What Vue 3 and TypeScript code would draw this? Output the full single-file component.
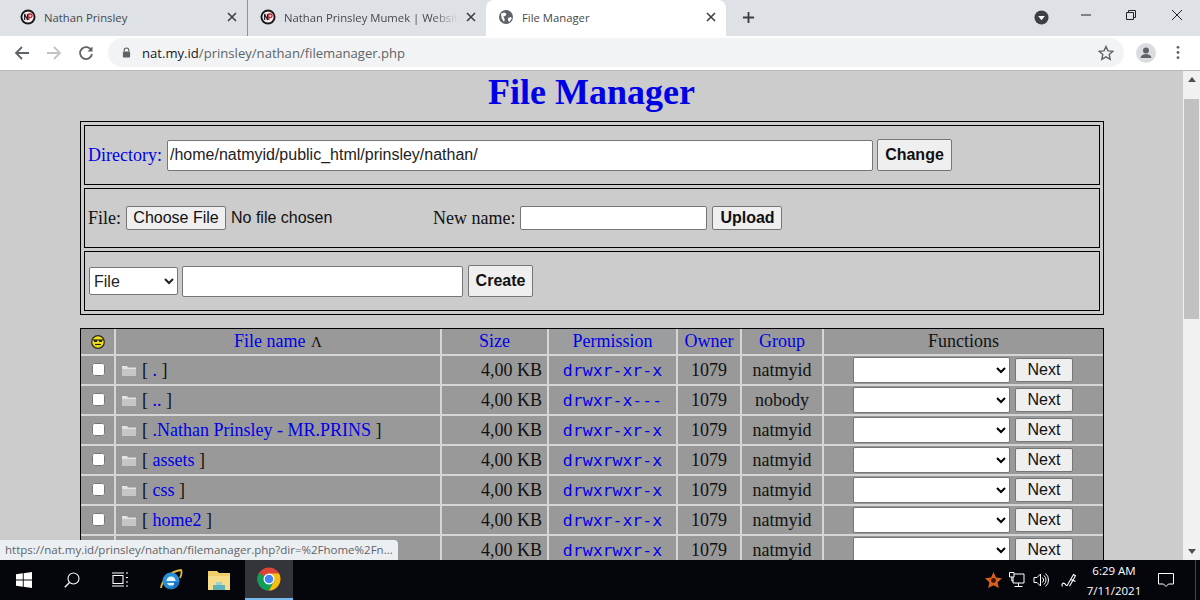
<script setup lang="ts">
// File Manager page inside a Chrome window on the Windows taskbar
interface FileRow {
  id: number;
  name: string;
  perm: string;
  group: string;
}

// the last row's name sits behind the status bubble
const files: FileRow[] = [
  { id: 1, name: ".", perm: "drwxr-xr-x", group: "natmyid" },
  { id: 2, name: "..", perm: "drwxr-x---", group: "nobody" },
  { id: 3, name: ".Nathan Prinsley - MR.PRINS", perm: "drwxr-xr-x", group: "natmyid" },
  { id: 4, name: "assets", perm: "drwxrwxr-x", group: "natmyid" },
  { id: 5, name: "css", perm: "drwxrwxr-x", group: "natmyid" },
  { id: 6, name: "home2", perm: "drwxr-xr-x", group: "natmyid" },
  { id: 7, name: "", perm: "drwxrwxr-x", group: "natmyid" },
];
</script>

<template>
  <div class="screen">
    <!-- tab strip -->
    <div class="tabstrip">
      <div class="tab">
        <svg class="favicon" viewBox="0 0 16 16"><circle cx="8" cy="8" r="7.5" fill="#1c1518" /><circle cx="8" cy="8" r="5.6" fill="#f3eeee" /><path d="M4.6 11V5l3 6V5" fill="none" stroke="#26262c" stroke-width="1.3" /><path d="M8.8 11V5h1.5a1.7 1.7 0 0 1 0 3.6H8.8" fill="none" stroke="#c0202a" stroke-width="1.3" /></svg>
        <span class="tab-title">Nathan Prinsley</span>
        <svg class="tab-close" viewBox="0 0 10 10"><path d="M1 1l8 8M9 1l-8 8" stroke="#3c4043" stroke-width="1.6" /></svg>
      </div>
      <div class="tab tab--second">
        <svg class="favicon" viewBox="0 0 16 16"><circle cx="8" cy="8" r="7.5" fill="#1c1518" /><circle cx="8" cy="8" r="5.6" fill="#f3eeee" /><path d="M4.6 11V5l3 6V5" fill="none" stroke="#26262c" stroke-width="1.3" /><path d="M8.8 11V5h1.5a1.7 1.7 0 0 1 0 3.6H8.8" fill="none" stroke="#c0202a" stroke-width="1.3" /></svg>
        <span class="tab-title tab-title--fade">Nathan Prinsley Mumek | Website</span>
        <svg class="tab-close" viewBox="0 0 10 10"><path d="M1 1l8 8M9 1l-8 8" stroke="#3c4043" stroke-width="1.6" /></svg>
      </div>
      <div class="tab tab--active">
        <svg class="favicon favicon--globe" viewBox="0 0 16 16"><circle cx="8" cy="8" r="7" fill="#5f6368" /><path d="M3 4.5l3.5-1 2 1.5-1.2 2 -2 .5 1.5 3-.8 2.5L3.5 9zM10 9l3-1 .8 1.5-2.5 3.5-1.3-1.5z" fill="#fff" /></svg>
        <span class="tab-title">File Manager</span>
        <svg class="tab-close" viewBox="0 0 10 10"><path d="M1 1l8 8M9 1l-8 8" stroke="#3c4043" stroke-width="1.6" /></svg>
      </div>
      <svg class="new-tab" viewBox="0 0 14 14"><path d="M7 1v12M1 7h12" stroke="#3c4043" stroke-width="2" /></svg>
      <div class="window-controls">
        <svg class="tab-search" viewBox="0 0 16 16"><circle cx="8" cy="8" r="7.5" fill="#3c4043" /><path d="M4.5 6.5h7L8 11z" fill="#fff" /></svg>
        <svg class="win-btn win-btn--min" viewBox="0 0 12 12"><path d="M1 6h10" stroke="#222" /></svg>
        <svg class="win-btn win-btn--max" viewBox="0 0 12 12"><path d="M1.5 3.5h7v7h-7zM3.5 3.500v-2h7v7h-2" fill="none" stroke="#222" /></svg>
        <svg class="win-btn win-btn--close" viewBox="0 0 12 12"><path d="M1 1l10 10M11 1L1 11" stroke="#222" /></svg>
      </div>
    </div>

    <!-- address bar -->
    <div class="toolbar">
      <svg class="nav-icon" viewBox="0 0 16 16"><path d="M15 8H2M8 2L2 8l6 6" fill="none" stroke="#5f6368" stroke-width="1.8" /></svg>
      <svg class="nav-icon" viewBox="0 0 16 16"><path d="M1 8h13M8 2l6 6-6 6" fill="none" stroke="#c2c4c7" stroke-width="1.8" /></svg>
      <svg class="nav-icon" viewBox="0 0 16 16"><path d="M13.500 5.500A6 6 0 1 0 14 9" fill="none" stroke="#5f6368" stroke-width="1.8" /><path d="M14.500 1.500v5h-5z" fill="#5f6368" /></svg>
      <div class="omnibox">
        <svg class="lock" viewBox="0 0 10 12"><path d="M2.500 5V3.500a2.500 2.500 0 0 1 5 0V5" fill="none" stroke="#5f6368" stroke-width="1.300" /><rect x="1" y="5" width="8" height="6.500" rx="1" fill="#5f6368" /></svg>
        <span class="url"><span class="url-host">nat.my.id</span>/prinsley/nathan/filemanager.php</span>
        <svg class="star" viewBox="0 0 16 16"><path d="M8 1.500l2 4.400 4.700.5-3.500 3.200 1 4.700L8 11.900l-4.200 2.400 1-4.700-3.500-3.200 4.700-.5z" fill="none" stroke="#5f6368" stroke-width="1.400" /></svg>
      </div>
      <div class="profile">
        <svg viewBox="0 0 20 20"><circle cx="10" cy="10" r="10" fill="#dadce0" /><circle cx="10" cy="7.500" r="3" fill="#5f6368" /><path d="M4.500 15c.5-3 3-4 5.500-4s5 1 5.500 4z" fill="#5f6368" /></svg>
      </div>
      <svg class="menu-dots" viewBox="0 0 4 16"><circle cx="2" cy="2.500" r="1.500" fill="#5f6368" /><circle cx="2" cy="8" r="1.500" fill="#5f6368" /><circle cx="2" cy="13.500" r="1.500" fill="#5f6368" /></svg>
    </div>

    <!-- page -->
    <div class="viewport">
      <div class="page">
        <h1 class="title">File Manager</h1>

        <div class="forms">
          <div class="form-row">
            <span class="label label--link">Directory:</span>
            <input class="field field--dir" type="text" value="/home/natmyid/public_html/prinsley/nathan/" />
            <button class="btn btn--bold btn--change" type="button">Change</button>
          </div>
          <div class="form-row">
            <span class="label">File:</span>
            <button class="btn btn--choose" type="button">Choose File</button>
            <span class="no-file">No file chosen</span>
            <span class="label label--newname">New name:</span>
            <input class="field field--newname" type="text" />
            <button class="btn btn--bold btn--upload" type="button">Upload</button>
          </div>
          <div class="form-row">
            <select class="type-select">
              <option>File</option>
            </select>
            <input class="field field--create" type="text" />
            <button class="btn btn--bold btn--create" type="button">Create</button>
          </div>
        </div>

        <table class="files">
          <colgroup>
            <col style="width: 35px" />
            <col style="width: 326px" />
            <col style="width: 107px" />
            <col style="width: 129px" />
            <col style="width: 64px" />
            <col style="width: 82px" />
            <col style="width: 279px" />
          </colgroup>
          <thead>
            <tr>
              <th>
                <svg class="smiley" viewBox="0 0 14 14"><circle cx="7" cy="7" r="6.300" fill="#efe021" stroke="#2a2a10" stroke-width="1.200" /><path d="M1.500 5h11" stroke="#2a2a10" stroke-width="1.200" /><rect x="3" y="5" width="3" height="2" fill="#2a2a10" /><rect x="8" y="5" width="3" height="2" fill="#2a2a10" /><path d="M4 9.500h6" stroke="#2a2a10" stroke-width="1.200" /></svg>
              </th>
              <th><a class="link">File name</a> <span class="sort">Λ</span></th>
              <th><a class="link">Size</a></th>
              <th class="th--perm"><a class="link">Permission</a></th>
              <th><a class="link">Owner</a></th>
              <th><a class="link">Group</a></th>
              <th>Functions</th>
            </tr>
          </thead>
          <tbody>
            <tr v-for="file in files" :key="file.id">
              <td class="cell-check"><input class="check" type="checkbox" /></td>
              <td class="cell-name">
                <svg class="folder" viewBox="0 0 14 11"><path d="M0 1h5l1 1.500h8V11H0z" fill="#e2e2e2" /><path d="M0 4h14v7H0z" fill="#c6c6c6" /></svg>
                <span v-if="file.name">[ <a class="link">{{ file.name }}</a> ]</span>
              </td>
              <td class="cell-size">4,00 KB</td>
              <td class="cell-center"><a class="perm">{{ file.perm }}</a></td>
              <td class="cell-center">1079</td>
              <td class="cell-center">{{ file.group }}</td>
              <td class="cell-actions">
                <select class="action-select"><option></option></select>
                <button class="btn btn--next" type="button">Next</button>
              </td>
            </tr>
          </tbody>
        </table>
      </div>

      <div class="scrollbar">
        <svg class="sb-arrow" viewBox="0 0 8 5"><path d="M0 5l4-5 4 5z" fill="#505050" /></svg>
        <div class="sb-track"><div class="sb-thumb"></div></div>
        <svg class="sb-arrow" viewBox="0 0 8 5"><path d="M0 0l4 5 4-5z" fill="#505050" /></svg>
      </div>

      <div class="status">https://nat.my.id/prinsley/nathan/filemanager.php?dir=%2Fhome%2Fn...</div>
    </div>

    <!-- windows taskbar -->
    <div class="taskbar">
      <div class="task-item">
        <svg class="task-win" viewBox="0 0 16 16"><path d="M0 2.300l6.800-1v6.300H0zM7.700 1.200L16 0v7.600H7.700zM0 8.400h6.800v6.300l-6.800-1zM7.700 8.400H16V16l-8.300-1.200z" fill="#fff" /></svg>
      </div>
      <div class="task-item">
        <svg class="task-icon" viewBox="0 0 16 16"><circle cx="9.500" cy="6.500" r="5.500" fill="none" stroke="#fff" stroke-width="1.100" /><path d="M5.500 10.500L.8 15.200" stroke="#fff" stroke-width="1.300" /></svg>
      </div>
      <div class="task-item">
        <svg class="task-icon" viewBox="0 0 16 16"><path d="M1 3.500h10v8H1zM0 1h12M0 14h12M14 1h2M14 5.500h2M14 10h2M14 14h2" fill="none" stroke="#fff" stroke-width="1.100" /></svg>
      </div>
      <div class="task-item task-item--ie">
        <svg class="task-app" viewBox="0 0 24 24"><path d="M2 20C3 12 12 3 22 2c1.500 3 0 6-1 8" fill="none" stroke="#e3b93a" stroke-width="1.800" /><circle cx="12" cy="13" r="8.500" fill="#2a8fd8" /><circle cx="12" cy="13" r="4.500" fill="#e8f5fc" /><path d="M4 13h16v2H4z" fill="#2a8fd8" /><path d="M15 14h5c-.5 4-4 7-8 7-2 0-3-.5-4-1.500h5c1 0 1.500-.5 2-1.500z" fill="#1c6fb8" /></svg>
      </div>
      <div class="task-item">
        <svg class="task-app" viewBox="0 0 24 24"><path d="M1 3h9l2 2h11v17H1z" fill="#f0cf6b" /><path d="M1 8h22v14H1z" fill="#f7dd8a" /><path d="M6 17h12v5H6z" fill="#5fb2b8" /><path d="M9 14h6v3H9z" fill="#9ed3d6" /></svg>
      </div>
      <div class="task-item task-item--active">
        <svg class="task-app" viewBox="0 0 48 48"><circle cx="24" cy="24" r="23" fill="#db4437" /><path d="M24 24L4 12A23 23 0 0 0 24 47l10-18z" fill="#0f9d58" /><path d="M24 13h20a23 23 0 0 1-20 34l11-20z" fill="#f4c20d" /><circle cx="24" cy="24" r="11" fill="#fff" /><circle cx="24" cy="24" r="8.500" fill="#4285f4" /></svg>
      </div>

      <div class="tray">
        <svg class="tray-star" viewBox="0 0 18 18"><path d="M9 0l2.600 5.700L18 6.500l-4.600 4.300 1.200 6.200L9 14l-5.600 3 1.200-6.200L0 6.500l6.400-.8z" fill="#d9601c" /><circle cx="9" cy="9" r="2.600" fill="#3a1510" /></svg>
        <svg class="tray-net" viewBox="0 0 16 16"><path d="M4 2h11v9H4zM9.500 11v3M5.500 14.500h8" fill="none" stroke="#fff" /><path d="M.5.500h4.500v4.500H.5z" fill="#0a0a10" stroke="#fff" /><path d="M2.800 5v4h1.500" fill="none" stroke="#fff" /></svg>
        <svg class="tray-vol" viewBox="0 0 16 16"><path d="M1 5.500h3L7.500 2v12L4 10.500H1z" fill="none" stroke="#fff" /><path d="M9.500 5.500a3.500 3.500 0 0 1 0 5M11 3.500a6 6 0 0 1 0 9M12.500 1.500a8.500 8.500 0 0 1 0 13" fill="none" stroke="#fff" /></svg>
        <svg class="tray-pen" viewBox="0 0 16 16"><path d="M1.500 14.500c-1.500-2 .5-4 2-3s1.500 3 3 1.500l6-10.500 2 1.200-6 10.500" fill="none" stroke="#fff" stroke-width="1.100" /><path d="M10 8c1.500-.5 3 .5 4.500 1.500" fill="none" stroke="#fff" stroke-width="1.100" /></svg>
        <div class="clock">
          <div>6:29 AM</div>
          <div>7/11/2021</div>
        </div>
        <svg class="tray-note" viewBox="0 0 16 16"><path d="M.5 1.500h15v10.500h-5L8 14.500 5.500 12h-5z" fill="none" stroke="#fff" /></svg>
        <div class="show-desktop"></div>
      </div>
    </div>
  </div>
</template>

<style>
html,
body {
  margin: 0;
  overflow: hidden;
}
</style>

<style scoped>
.screen {
  width: 1200px;
  height: 600px;
  display: flex;
  flex-direction: column;
  overflow: hidden;
  font-family: "Liberation Serif", serif;
}

/* Tab strip */
.tabstrip {
  height: 36px;
  flex: none;
  display: flex;
  align-items: stretch;
  padding-left: 8px;
  background: #dee1e6;
  font-family: "Open Sans", "Liberation Sans", sans-serif;
  font-size: 11.3px;
  color: #45484c;
}

.tab {
  width: 239px;
  box-sizing: border-box;
  display: flex;
  align-items: center;
  padding: 0 8px 2px 12px;
  position: relative;
}

.tab--second {
  width: 239px;
  border-left: 1px solid #8f9296;
  margin: 0;
  padding-left: 12px;
}

.tab--active {
  width: 240px;
  background: #fff;
  border-radius: 8px 8px 0 0;
}

.favicon {
  width: 16px;
  height: 16px;
  flex: none;
  margin-right: 8px;
}

.tab-title {
  flex: 1;
  white-space: nowrap;
  overflow: hidden;
}

.tab-title--fade {
  -webkit-mask-image: linear-gradient(to right, #000 85%, transparent 100%);
  mask-image: linear-gradient(to right, #000 85%, transparent 100%);
}

.tab-close {
  width: 10px;
  height: 10px;
  flex: none;
  margin: 0 2px 0 8px;
}

.new-tab {
  width: 13px;
  height: 13px;
  align-self: center;
  margin: -2px 0 0 16px;
}

.window-controls {
  margin-left: auto;
  display: flex;
  align-items: center;
  padding: 0 17px 2px 0;
}

.tab-search {
  width: 15px;
  height: 15px;
  margin: 1px 31px 0 0;
}

.win-btn {
  width: 12px;
  height: 12px;
  margin-top: -4px;
}

.win-btn--min {
  margin-right: 33px;
}

.win-btn--max {
  margin-right: 34px;
}

/* Toolbar */
.toolbar {
  height: 35px;
  flex: none;
  display: flex;
  align-items: center;
  box-sizing: border-box;
  padding: 0 0 1px 14px;
  background: #fff;
  border-bottom: 1px solid #b9b9b9;
}

.nav-icon {
  width: 16px;
  height: 16px;
  margin-right: 16px;
}

.omnibox {
  width: 1016px;
  height: 29px;
  margin-left: -2px;
  display: flex;
  align-items: center;
  padding: 0 10px 0 14px;
  box-sizing: border-box;
  border-radius: 15px;
  background: #f1f3f4;
  font-family: "Open Sans", "Liberation Sans", sans-serif;
  font-size: 13.1px;
  color: #5f6368;
}

.lock {
  width: 9px;
  height: 11px;
  margin-right: 11px;
}

.url {
  flex: 1;
}

.url-host {
  color: #202124;
}

.star {
  width: 16px;
  height: 16px;
}

.profile {
  width: 20px;
  height: 20px;
  margin-left: 12px;
}

.menu-dots {
  width: 4px;
  height: 15px;
  margin-left: 20px;
}

/* Page */
.viewport {
  flex: 1;
  min-height: 0;
  display: flex;
  position: relative;
  background: #ccc;
  overflow: hidden;
}

.page {
  flex: 1;
  min-width: 0;
  color: #111;
  font-size: 18px;
}

.title {
  margin: 0;
  height: 50px;
  line-height: 43px;
  text-align: center;
  font-size: 36px;
  font-weight: bold;
  color: #0000e6;
  padding-right: 0;
}

.forms {
  margin-left: 80px;
  width: 1024px;
  box-sizing: border-box;
  border: 1px solid #000;
  padding: 3px;
  display: flex;
  flex-direction: column;
  gap: 2px;
}

.form-row {
  height: 60px;
  box-sizing: border-box;
  border: 1px solid #000;
  display: flex;
  align-items: center;
  padding: 0 0 0 3px;
}

.form-row + .form-row {
  margin-top: 1px;
}

.form-row:nth-child(3) {
  padding-left: 4px;
}

.label {
  white-space: nowrap;
}

.label--link {
  color: #0000e6;
  margin-right: 5px;
}

.label--newname {
  margin-left: 99px;
  margin-right: 5px;
}

.field {
  box-sizing: border-box;
  border: 1px solid #767676;
  border-radius: 2px;
  background: #fff;
  font-family: "Liberation Sans", sans-serif;
  font-size: 16px;
  color: #222;
  padding: 1px 2px;
  margin: 0;
}

.field--dir {
  width: 706px;
  height: 31px;
}

.field--newname {
  width: 187px;
  height: 24px;
}

.field--create {
  width: 281px;
  height: 31px;
  margin-left: 4px;
}

.btn {
  box-sizing: border-box;
  border: 1px solid #767676;
  border-radius: 2px;
  background: #efefef;
  font-family: "Liberation Sans", sans-serif;
  font-size: 16px;
  color: #111;
  padding: 0;
  margin: 0;
}

.btn--bold {
  font-weight: bold;
}

.btn--change {
  width: 75px;
  height: 32px;
  margin-left: 4px;
}

.btn--choose {
  width: 100px;
  height: 24px;
  margin-left: 5px;
}

.no-file {
  width: 103px;
  margin-left: 5px;
  font-family: "Liberation Sans", sans-serif;
  font-size: 16px;
  white-space: nowrap;
}

.btn--upload {
  width: 70px;
  height: 24px;
  margin-left: 5px;
}

.btn--create {
  width: 65px;
  height: 32px;
  margin-left: 5px;
}

.type-select {
  width: 89px;
  height: 28px;
  box-sizing: border-box;
  background: #fff;
  border: 1px solid #767676;
  border-radius: 2px;
  font-family: "Liberation Sans", sans-serif;
  font-size: 16px;
  color: #222;
  margin: 0;
}

/* File table */
.files {
  margin: 13px 0 0 80px;
  width: 1024px;
  table-layout: fixed;
  border-collapse: separate;
  border-spacing: 0;
  border: 1px solid #000;
  border-bottom: none;
  background: #999;
  font-size: 18px;
  color: #111;
}

.files th,
.files td {
  padding: 0;
  border-right: 2px solid #d6d6d6;
  border-bottom: 2px solid #d6d6d6;
  box-sizing: border-box;
  height: 30px;
  font-weight: normal;
  overflow: hidden;
  white-space: nowrap;
}

.files th {
  height: 27px;
  text-align: center;
}

.files th:last-child,
.files td:last-child {
  border-right: none;
}

.th--perm {
  background: #9b9d9f;
}

.link {
  color: #0000e6;
}

.sort {
  margin-left: 1px;
  font-size: 15px;
}

.smiley {
  width: 14px;
  height: 14px;
  display: block;
  margin: 0 auto;
}

.cell-check {
  text-align: center;
}

.check {
  display: block;
  width: 13px;
  height: 13px;
  margin: -2px 0 0 11px;
}

.cell-name {
  padding-left: 6px !important;
}

.cell-name span {
  vertical-align: middle;
}

.folder {
  width: 14px;
  height: 11px;
  margin-right: 6px;
  vertical-align: middle;
}

.cell-size {
  text-align: right;
  padding-right: 5px !important;
}

.cell-center {
  text-align: center;
}

.perm {
  font-family: "DejaVu Sans Mono", monospace;
  font-size: 16.500px;
  color: #0000e6;
}

.cell-actions {
  padding-left: 29px !important;
}

.cell-actions > * {
  vertical-align: middle;
}

.action-select {
  width: 157px;
  height: 26px;
  box-sizing: border-box;
  background: #fff;
  border: 1px solid #767676;
  border-radius: 2px;
  margin: 0;
}

.btn--next {
  width: 58px;
  height: 24px;
  margin-left: 5px;
  font-weight: normal;
}

/* Scrollbar */
.scrollbar {
  width: 17px;
  flex: none;
  display: flex;
  flex-direction: column;
  align-items: center;
  background: #f1f1f1;
}

.sb-arrow {
  width: 8px;
  height: 5px;
  margin: 6px 0;
  flex: none;
}

.sb-track {
  flex: 1;
  width: 100%;
}

.sb-thumb {
  width: 15px;
  height: 220px;
  margin: 11px auto 0;
  background: #c1c1c1;
}

.status {
  position: absolute;
  left: 0;
  bottom: 0;
  width: 398px;
  height: 20px;
  box-sizing: border-box;
  padding: 2px 0 0 5px;
  background: #eceff1;
  border-top-right-radius: 4px;
  font-family: "Open Sans", "Liberation Sans", sans-serif;
  font-size: 11.500px;
  color: #5f6368;
  white-space: nowrap;
  overflow: hidden;
}

/* Taskbar */
.taskbar {
  height: 40px;
  flex: none;
  display: flex;
  background: #05060c;
  font-family: "Open Sans", "Liberation Sans", sans-serif;
  color: #fff;
}

.task-item {
  width: 48px;
  display: flex;
  align-items: center;
  justify-content: center;
  box-sizing: border-box;
}

.task-item--ie {
  margin-left: 3px;
}

.task-item--active {
  background: #33353a;
  border-bottom: 2px solid #76b9ed;
  margin-left: 2px;
}

.task-win {
  width: 16px;
  height: 16px;
}

.task-icon {
  width: 16px;
  height: 16px;
}

.task-app {
  width: 24px;
  height: 24px;
}

.tray {
  margin-left: auto;
  display: flex;
  align-items: center;
}

.tray-star {
  width: 17px;
  height: 17px;
  margin-right: 7px;
}

.tray-net {
  width: 16px;
  height: 16px;
  margin-right: 8px;
}

.tray-vol {
  width: 16px;
  height: 16px;
  margin-right: 12px;
}

.tray-pen {
  width: 16px;
  height: 16px;
}

.clock {
  width: 60px;
  margin-left: 7px;
  padding-top: 1px;
  text-align: center;
  font-size: 11.500px;
  line-height: 20px;
}

.tray-note {
  width: 16px;
  height: 16px;
  margin-left: 14px;
}

.show-desktop {
  width: 4px;
  height: 40px;
  margin-left: 21px;
  border-left: 1px solid #444;
}
</style>
